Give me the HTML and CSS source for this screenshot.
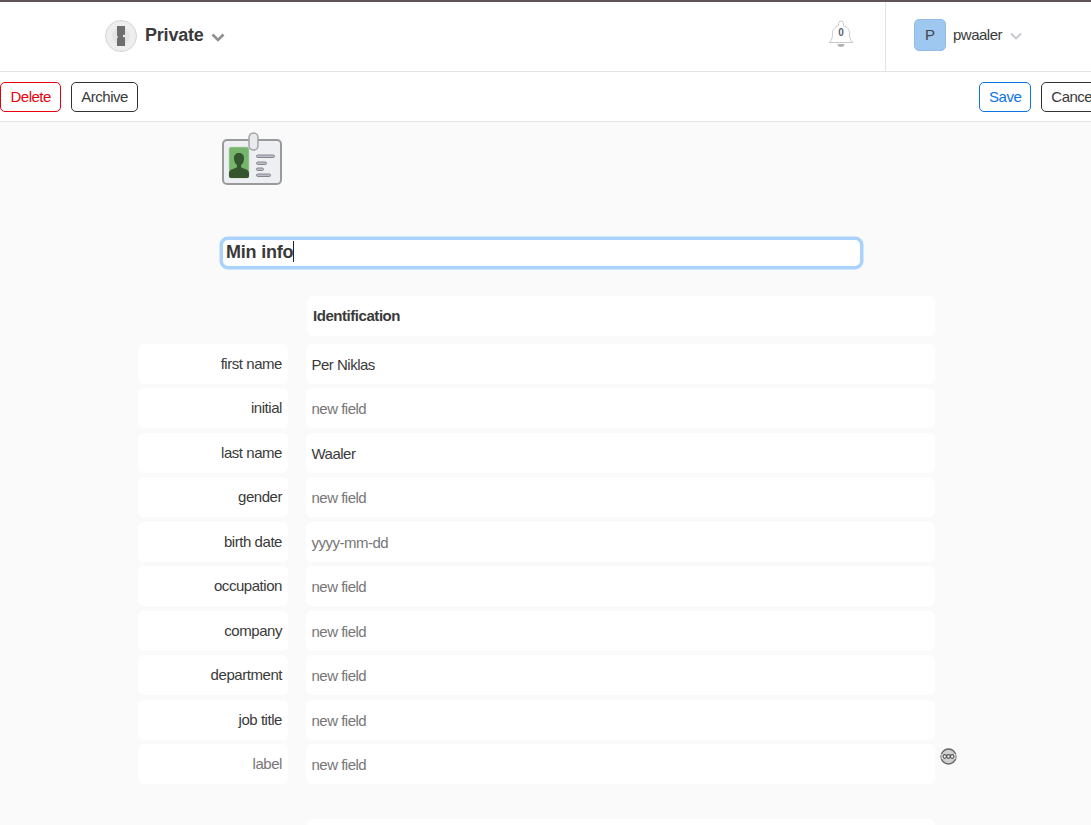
FILE: index.html
```html
<!DOCTYPE html>
<html lang="en">
<head>
  <meta charset="UTF-8" />
  <title>Min info</title>
  <link rel="stylesheet" href="styles.css">
</head>
<body>
  <header class="topbar">
    <div class="vault">
      <svg class="vault-icon" width="32" height="32" viewBox="0 0 32 32">
        <circle cx="16" cy="16" r="15.500" fill="#eeeeee" stroke="#d4d4d4"/>
        <circle cx="16" cy="16" r="9" fill="#e4e4e4"/>
        <path d="M12 6h8v8.500l-1 1.500 1 1.500V26h-8v-7.500l1-1.500-1-1.500z" fill="#6e6e6e"/>
        <circle cx="19" cy="16" r="1.200" fill="#eeeeee"/>
      </svg>
      <span class="vault-name">Private</span>
      <svg class="chevron" width="14" height="9" viewBox="0 0 14 9"><path d="M1.500 1.500L7 7l5.500-5.500" fill="none" stroke="#8f8f8f" stroke-width="2.600"/></svg>
    </div>
    <div class="bell">
      <svg width="26" height="30" viewBox="0 0 26 30">
        <path d="M1 23.500c3-2 3.500-5 3.500-9 0-4 2.500-7 6-7.800V4.500a2.500 2.500 0 0 1 5 0v2.200c3.500.8 6 3.800 6 7.800 0 4 .5 7 3.500 9z" fill="#fff" stroke="#c9c9c9"/>
        <path d="M9.500 25h7a3.500 3 0 0 1-7 0z" fill="#b5b5b5"/>
      </svg>
      <span class="bell-count">0</span>
    </div>
    <div class="account">
      <span class="avatar">P</span>
      <span class="username">pwaaler</span>
      <svg class="chevron" width="12" height="8" viewBox="0 0 12 8"><path d="M1 1.500l5 5 5-5" fill="none" stroke="#c3c6cc" stroke-width="1.800"/></svg>
    </div>
  </header>

  <div class="toolbar">
    <div class="btn-group">
      <button class="btn btn-danger">Delete</button>
      <button class="btn">Archive</button>
    </div>
    <div class="btn-group">
      <button class="btn btn-primary">Save</button>
      <button class="btn">Cancel</button>
    </div>
  </div>

  <main class="content">
    <svg class="item-icon" width="62" height="54" viewBox="0 0 62 54">
      <rect x="1" y="8" width="58" height="44" rx="4" fill="#eeeff3" stroke="#999a9c" stroke-width="2"/>
      <rect x="7" y="15" width="20" height="31" rx="2" fill="#75b56c" stroke="#c3d6c0" stroke-width=".6"/>
      <path d="M7 44v-3c0-4 6-4 8-6v-2c-2-1-3-4-3-7 0-3 2-5 5-5s5 2 5 5c0 3-1 6-3 7v2c2 2 8 2 8 6v3a2 2 0 0 1-2 2H9a2 2 0 0 1-2-2z" fill="#35552f"/>
      <rect x="27" y="1" width="9" height="17" rx="4.500" fill="#e9eaee" stroke="#a3a4a8" stroke-width="1.500"/>
      <g fill="#bcbfc9" stroke="#85878f">
        <rect x="34.500" y="23" width="18" height="2.500" rx="1.200"/>
        <rect x="34.500" y="30" width="10" height="2.500" rx="1.200"/>
        <rect x="34.500" y="36" width="7" height="2.500" rx="1.200"/>
        <rect x="34.500" y="42" width="14" height="2.500" rx="1.200"/>
      </g>
    </svg>

    <div class="title-field">Min info<span class="caret"></span></div>

    <div class="section-head">Identification</div>

    <div class="fields">
      <div class="field-label">first name</div>
      <div class="field-value filled">Per Niklas</div>
      <div class="field-label">initial</div>
      <div class="field-value">new field</div>
      <div class="field-label">last name</div>
      <div class="field-value filled">Waaler</div>
      <div class="field-label">gender</div>
      <div class="field-value">new field</div>
      <div class="field-label">birth date</div>
      <div class="field-value">yyyy-mm-dd</div>
      <div class="field-label">occupation</div>
      <div class="field-value">new field</div>
      <div class="field-label">company</div>
      <div class="field-value">new field</div>
      <div class="field-label">department</div>
      <div class="field-value">new field</div>
      <div class="field-label">job title</div>
      <div class="field-value">new field</div>
      <div class="field-label muted">label</div>
      <div class="field-value">
        new field
        <svg class="more" width="17" height="17" viewBox="0 0 17 17">
          <circle cx="8.500" cy="8.500" r="7.500" fill="#d0d0d0" stroke="#666" stroke-width="1.300"/>
          <rect x="1.500" y="6" width="14" height="5" fill="#ececec"/>
          <g fill="none" stroke="#555" stroke-width="1.200">
            <circle cx="4.800" cy="8.500" r="1.800"/>
            <circle cx="8.500" cy="8.500" r="1.800"/>
            <circle cx="12.200" cy="8.500" r="1.800"/>
          </g>
        </svg>
      </div>
    </div>

    <div class="section-head next"></div>
  </main>
</body>
</html>
```

FILE: styles.css
```css
* {
  box-sizing: border-box;
}

html, body {
  height: 825px;
  overflow: hidden;
}

body {
  margin: 0;
  font-family: "Liberation Sans", Arial, sans-serif;
  font-size: 15px;
  letter-spacing: -0.5px;
  color: #3a3a3a;
  background-color: #fafafa;
}

.topbar {
  display: flex;
  align-items: center;
  height: 72px;
  background: white;
  border-top: 2px solid #5f5458;
  border-bottom: 1px solid #e3e3e3;
}

.vault {
  display: flex;
  align-items: center;
  margin-left: 105px;
  padding-bottom: 2px;
}

.vault-name {
  margin-left: 8px;
  font-size: 18px;
  font-weight: bold;
  letter-spacing: -0.2px;
}

.vault .chevron {
  margin-left: 7px;
  margin-top: 3px;
}

.bell {
  position: relative;
  display: flex;
  margin-left: auto;
  margin-right: 31px;
  padding-bottom: 5px;
}

.bell-count {
  position: absolute;
  top: 8px;
  left: 0;
  width: 100%;
  text-align: center;
  font-size: 10px;
  font-weight: bold;
  letter-spacing: 0;
  color: #5b6470;
}

.account {
  display: flex;
  align-items: center;
  width: 206px;
  height: 100%;
  padding-left: 28px;
  padding-bottom: 4px;
  border-left: 1px solid #e3e3e3;
}

.avatar {
  width: 32px;
  height: 32px;
  line-height: 30px;
  text-align: center;
  font-size: 15px;
  letter-spacing: 0;
  background: #9fc8f1;
  border: 1px solid #94bbe2;
  border-radius: 5px;
  color: #444;
}

.username {
  margin-left: 7px;
}

.account .chevron {
  margin-left: 8px;
  margin-top: 3px;
}

.toolbar {
  display: flex;
  justify-content: space-between;
  align-items: center;
  width: 1105px;
  height: 50px;
  background: white;
  border-bottom: 1px solid #e3e3e3;
}

.btn-group {
  display: flex;
  gap: 10px;
}

.btn {
  height: 30px;
  padding: 0 9px;
  font-family: inherit;
  font-size: 15px;
  letter-spacing: -0.5px;
  color: #3a3a3a;
  background: white;
  border: 1px solid #333;
  border-radius: 5px;
}

.btn-danger {
  padding: 0 9.5px;
  color: #e8000d;
  border-color: #e8000d;
}

.btn-primary {
  color: #0a74e6;
  border-color: #0a74e6;
}

.content {
  padding-left: 138px;
}

.item-icon {
  display: block;
  margin-left: 84px;
  margin-top: 10px;
}

.title-field {
  width: 643px;
  height: 32px;
  margin-left: 82px;
  margin-top: 51px;
  padding-left: 3px;
  line-height: 25px;
  font-size: 18px;
  font-weight: bold;
  letter-spacing: -0.2px;
  background: white;
  border: 3px solid #a9d3fb;
  border-radius: 8px;
  box-shadow: 0 0 0 0.5px #a9d3fb;
}

.caret {
  display: inline-block;
  width: 1px;
  height: 21px;
  vertical-align: -4px;
  background: #222;
}

.section-head {
  width: 628px;
  height: 40px;
  margin-left: 169px;
  margin-top: 27px;
  padding-left: 6px;
  line-height: 39px;
  font-weight: bold;
  letter-spacing: -0.45px;
  background: white;
  border-radius: 6px;
}

.section-head.next {
  margin-top: 34.5px;
}

.fields {
  display: grid;
  grid-template-columns: 150px 629px;
  column-gap: 18px;
  row-gap: 4.5px;
  margin-top: 7.5px;
}

.field-label,
.field-value {
  position: relative;
  height: 40px;
  line-height: 39px;
  background: white;
  border-radius: 6px;
}

.field-label {
  padding-right: 6px;
  text-align: right;
  letter-spacing: -0.45px;
}

.field-label.muted {
  color: #777;
}

.field-value {
  padding-left: 5.5px;
  line-height: 41px;
  color: #777;
}

.field-value.filled {
  color: #3a3a3a;
}

.more {
  position: absolute;
  top: 4px;
  left: 634px;
}
```
